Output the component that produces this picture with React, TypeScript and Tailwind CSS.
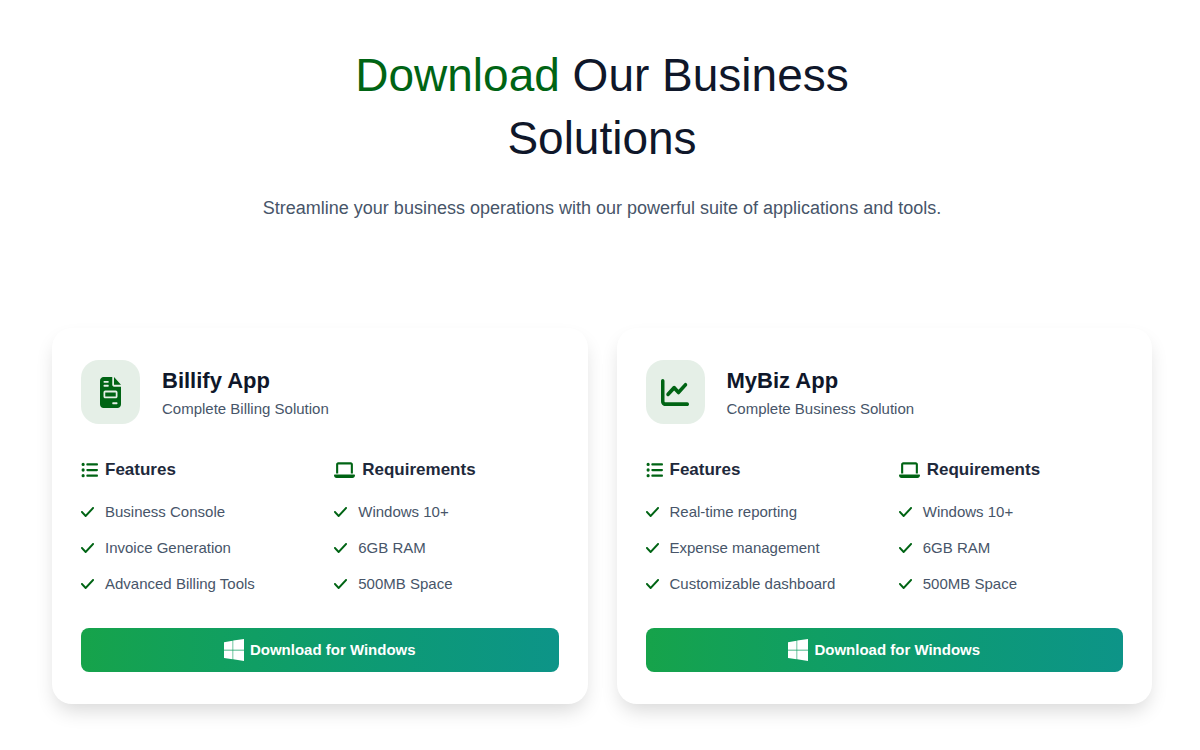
import { FaChartLine, FaCheck, FaFileInvoice, FaLaptop, FaListUl } from 'react-icons/fa6';
import type { IconType } from 'react-icons';

interface AppInfo {
    id: string;
    title: string;
    subtitle: string;
    icon: IconType;
    iconClass: string;
    features: string[];
    requirements: string[];
}

const REQUIREMENTS = ['Windows 10+', '6GB RAM', '500MB Space'];

const APPS: AppInfo[] = [
    {
        id: 'billify',
        title: 'Billify App',
        subtitle: 'Complete Billing Solution',
        icon: FaFileInvoice,
        iconClass: 'w-[21px] h-[31px]',
        features: ['Business Console', 'Invoice Generation', 'Advanced Billing Tools'],
        requirements: REQUIREMENTS
    },
    {
        id: 'mybiz',
        title: 'MyBiz App',
        subtitle: 'Complete Business Solution',
        icon: FaChartLine,
        iconClass: 'w-7 h-[31px]',
        features: ['Real-time reporting', 'Expense management', 'Customizable dashboard'],
        requirements: REQUIREMENTS
    }
];

const WindowsLogo = () => (
    <svg viewBox="0 0 20 22" className="w-5 h-[22px]" fill="currentColor" aria-hidden="true">
        <path d="M0 3.2 8.6 1.7V10.8H0zM9.2 1.6 20 0V10.8H9.2zM0 11.4H8.6V20.2L0 18.9zM9.2 11.4H20V22L9.2 20.3z" />
    </svg>
);

const CheckList = ({ title, icon: Icon, iconClass, items }: { title: string; icon: IconType; iconClass: string; items: string[] }) => (
    <div>
        <h4 className="flex items-center gap-[7px] mb-4 text-[17px] leading-7 font-bold text-[#1e293b]">
            <Icon className={`${iconClass} text-[#006414]`} preserveAspectRatio="none" />
            {title}
        </h4>
        <ul className="flex flex-col gap-3 text-[15px] leading-6 text-[#475569]">
            {items.map((item) => (
                <li key={item} className="flex items-center gap-[11px]">
                    <FaCheck className="w-[13px] h-4 text-[#006414]" preserveAspectRatio="none" />
                    {item}
                </li>
            ))}
        </ul>
    </div>
);

const AppCard = ({ app }: { app: AppInfo }) => {
    const Icon = app.icon;

    return (
        <article className="px-[29px] py-8 bg-white rounded-[20px] shadow-[0_10px_20px_-4px_rgba(0,0,0,0.16)]">
            <div className="flex items-center gap-[22px] mb-8">
                <div className="flex items-center justify-center w-[59px] h-16 rounded-[18px] bg-[#e5efe7]">
                    <Icon className={`${app.iconClass} text-[#006414]`} preserveAspectRatio="none" />
                </div>
                <div className="pt-0.5">
                    <h3 className="text-[22px] leading-8 font-bold text-[#0f172a]">{app.title}</h3>
                    <p className="text-[15px] leading-6 text-[#475569]">{app.subtitle}</p>
                </div>
            </div>

            <div className="grid grid-cols-2 gap-[29px] mb-8">
                <CheckList title="Features" icon={FaListUl} iconClass="w-[17px] h-[18px]" items={app.features} />
                <CheckList title="Requirements" icon={FaLaptop} iconClass="w-[21px] h-[18px]" items={app.requirements} />
            </div>

            <button
                type="button"
                className="flex items-center justify-center gap-1.5 w-full h-11 rounded-lg bg-linear-to-r from-[#16a34a] to-[#0d9488] text-[15px] font-bold text-white"
            >
                <WindowsLogo />
                Download for Windows
            </button>
        </article>
    );
};

export default function App() {
    return (
        <main className="pl-1 bg-white font-['Liberation_Sans',Arial,sans-serif]">
            <header className="max-w-[704px] mx-auto pt-11 text-center">
                <h1 className="max-w-[640px] mx-auto mb-6 text-[46px] leading-[63px] text-[#0f172a]">
                    <span className="text-[#006414]">Download</span> Our Business Solutions
                </h1>
                <p className="text-[18px] leading-7 text-[#475569]">
                    Streamline your business operations with our powerful suite of applications and tools.
                </p>
            </header>

            <section className="grid grid-cols-2 gap-[29px] max-w-[1100px] mx-auto pt-[106px] pb-12">
                {APPS.map((app) => (
                    <AppCard key={app.id} app={app} />
                ))}
            </section>
        </main>
    );
}
